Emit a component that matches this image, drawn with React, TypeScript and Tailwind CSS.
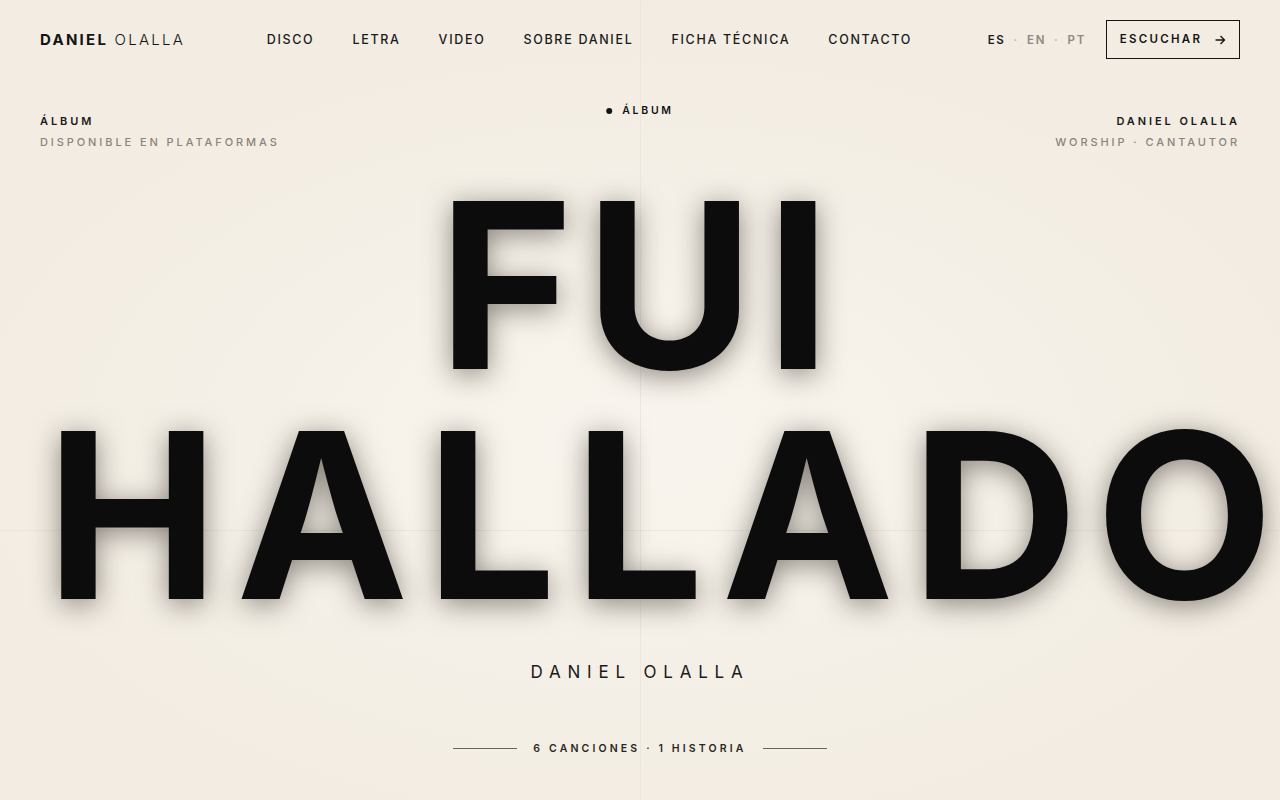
import React from "react";

const navItems = ["DISCO", "LETRA", "VIDEO", "SOBRE DANIEL", "FICHA TÉCNICA", "CONTACTO"];

export default function App() {
  return (
    <div
      className="relative w-full h-[800px] overflow-hidden text-[#141414] bg-[radial-gradient(ellipse_60%_55%_at_50%_55%,#f9f5ee_0%,#f5f0e7_50%,#f2ece2_100%)]"
      style={{ fontFamily: "Inter, 'Noto Sans', sans-serif" }}
    >
      {/* faint guide lines */}
      <div className="pointer-events-none absolute left-[640px] top-0 h-full w-px bg-[#e6dfd3] opacity-60" />
      <div className="pointer-events-none absolute left-0 top-[530px] h-px w-full bg-[#e6dfd3] opacity-60" />

      <header className="relative flex h-[78px] items-center justify-between px-10">
        <div className="pt-[2px] text-[15px] tracking-[0.15em]">
          <span className="font-bold">DANIEL</span>{" "}
          <span className="font-light">OLALLA</span>
        </div>
        <nav className="flex items-center gap-[38px] pl-[6px] pt-[2px]">
          {navItems.map((n) => (
            <a key={n} className="text-[12.5px] font-medium tracking-[0.135em] text-[#1a1a1a]">
              {n}
            </a>
          ))}
        </nav>
        <div className="flex items-center gap-5 pt-[1px]">
          <div className="flex items-center gap-2 pt-[2px] text-[11.5px] font-semibold tracking-[0.15em]">
            <span className="text-[#1a1a1a]">ES</span>
            <span className="text-[#b9b2a6]">·</span>
            <span className="text-[#8f897f]">EN</span>
            <span className="text-[#b9b2a6]">·</span>
            <span className="text-[#8f897f]">PT</span>
          </div>
          <button className="flex h-[39px] w-[134px] items-center justify-center gap-3 border-[1.5px] border-[#141414] pt-[1px] text-[11.5px] font-semibold tracking-[0.2em]">
            <span>ESCUCHAR</span>
            <svg width="12" height="12" viewBox="0 0 12 12" fill="none" stroke="#141414" strokeWidth="1.3">
              <path d="M1.5 6h9M6.5 2l4 4-4 4" />
            </svg>
          </button>
        </div>
      </header>

      <div className="relative flex items-start justify-between px-10 pt-[36px]">
        <div className="flex flex-col gap-[7px] text-[11px] leading-[14px] tracking-[0.265em]">
          <span className="font-semibold text-[#1a1a1a]">ÁLBUM</span>
          <span className="font-medium text-[#8a847a]">DISPONIBLE EN PLATAFORMAS</span>
        </div>
        <div className="absolute left-1/2 top-[26px] flex -translate-x-1/2 items-center gap-[10px] text-[10.5px] font-semibold leading-[14px] tracking-[0.26em]">
          <span className="h-[6px] w-[6px] rounded-full bg-[#141414]" />
          <span>ÁLBUM</span>
        </div>
        <div className="flex flex-col items-end gap-[7px] text-right text-[11px] leading-[14px] tracking-[0.265em]">
          <span className="font-semibold text-[#1a1a1a]">DANIEL OLALLA</span>
          <span className="font-medium text-[#8a847a]">WORSHIP · CANTAUTOR</span>
        </div>
      </div>

      <h1 className="relative mt-[21px] px-10 text-center text-[231px] font-bold leading-[230px] tracking-[0.05em] text-[#0c0c0c] whitespace-nowrap [text-shadow:0_5px_28px_rgba(30,24,18,0.5)]">
        <div>FUI</div>
        <div className="pl-[6px] tracking-[0.075em]">HALLADO</div>
      </h1>

      <div className="relative mt-[30px] text-center text-[17px] font-normal tracking-[0.4em] text-[#1a1a1a]">
        DANIEL OLALLA
      </div>

      <div className="relative mt-[55px] flex items-center justify-center gap-4">
        <span className="h-px w-16 bg-[#6b655c]" />
        <span className="text-[10.5px] font-semibold tracking-[0.3em] text-[#2a2723]">6 CANCIONES · 1 HISTORIA</span>
        <span className="h-px w-16 bg-[#6b655c]" />
      </div>
    </div>
  );
}
